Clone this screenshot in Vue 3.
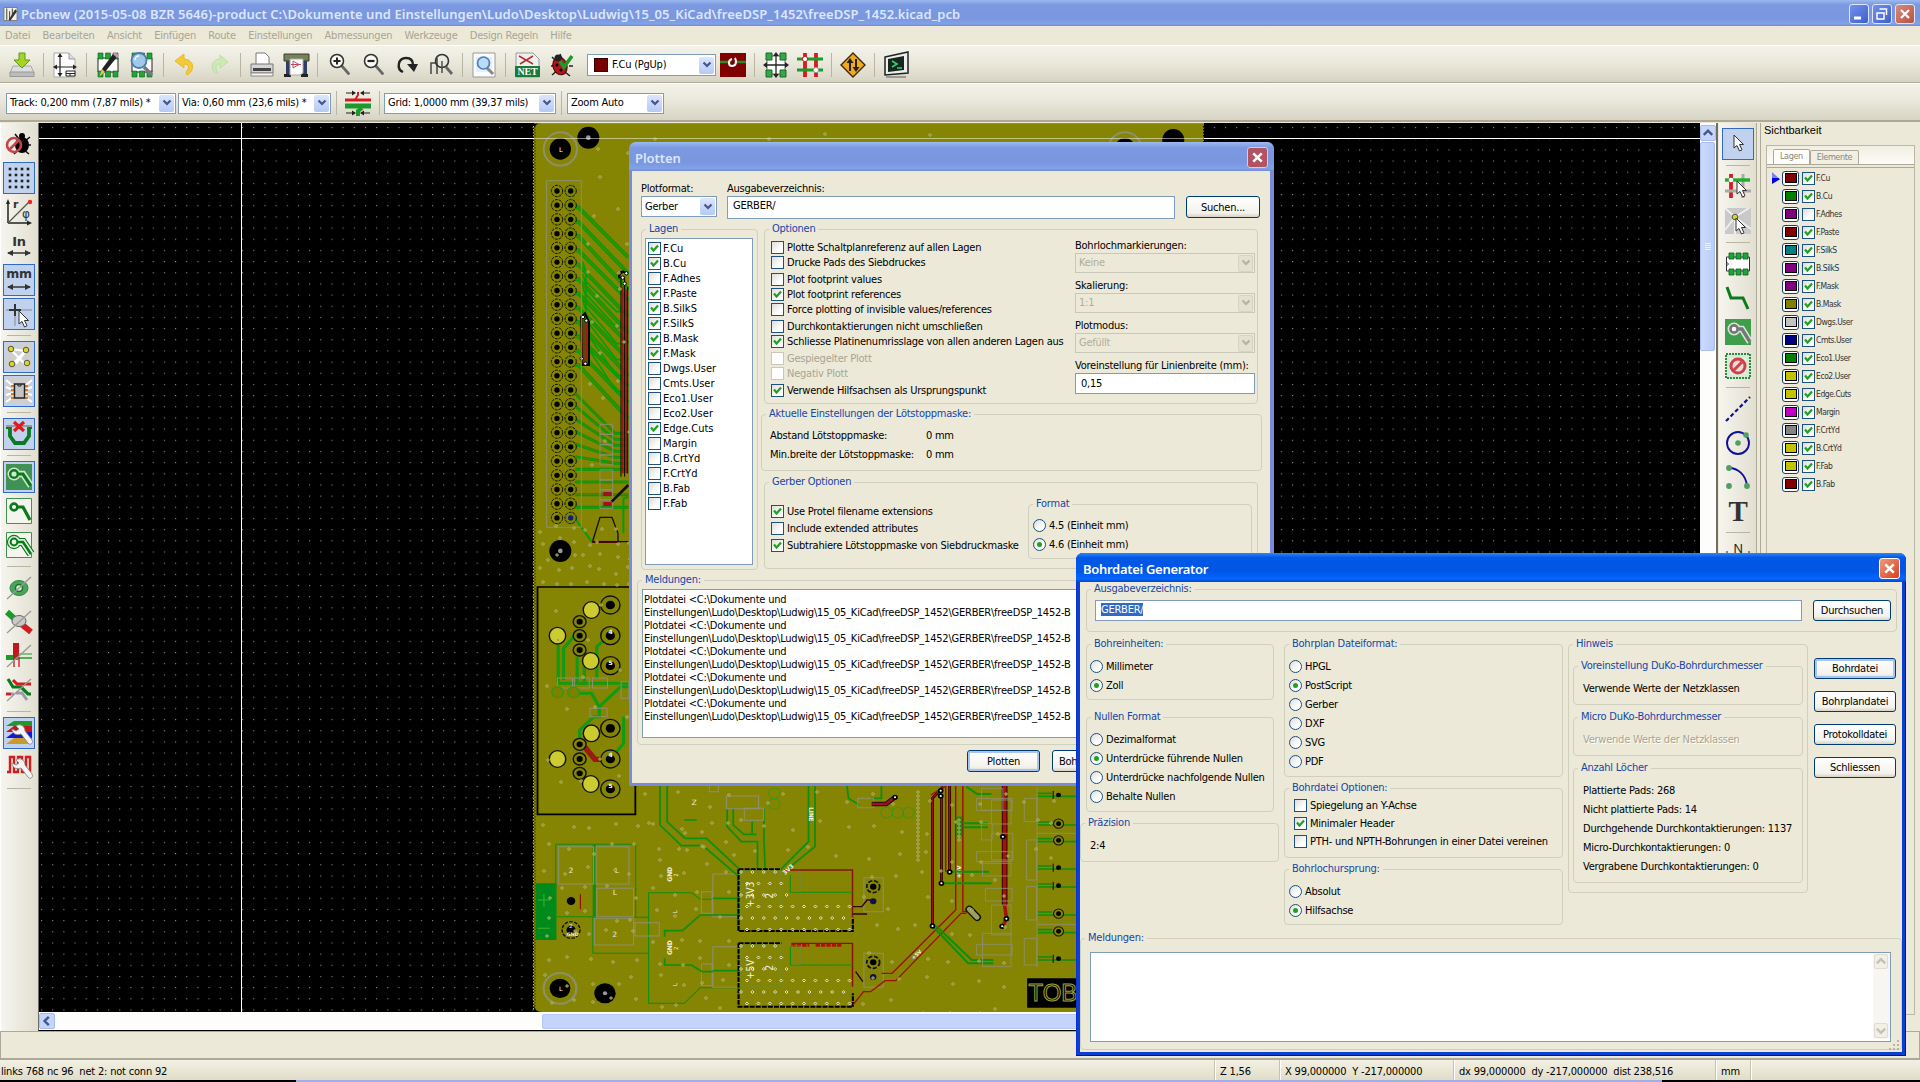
<script setup>
const svg = (body) => `<svg viewBox="0 0 26 26" width="26" height="26">${body}</svg>`
const pads = '<path fill="#fff" stroke="#222" stroke-width="1" d="M3 6h20v14H3z"/><path fill="#1fa53a" stroke="#0b5c1c" stroke-width=".6" d="M3 1h5v6H3zM10.500 1h5v6h-5zM18 1h5v6h-5zM3 19h5v6H3zM10.500 19h5v6h-5zM18 19h5v6h-5z"/>'
const lens = (x, y, r, sign) => `<path d="M${x + r * 0.7} ${y + r * 0.7}l7 8" stroke="#666" stroke-width="2.800" stroke-linecap="round"/><circle cx="${x}" cy="${y}" r="${r}" fill="#fafaf4" stroke="#333" stroke-width="1.600"/>${sign}`
const pointer = (x, y) => `<path transform="translate(${x} ${y})" d="M0 0v13l3-2.500 2.500 5.500 2.500-1.200-2.500-5.300h4z" fill="#fff" stroke="#333" stroke-width="1"/>`
const wrench = '<path d="M7 2c4-3 9 0 9 5l7 9c2 3-2 6-4 3l-7-9c-5 2-9-1-9-5l4 2 3-2z" fill="#f4f4f4" stroke="#888" stroke-width=".9"/>'
const arrows = '<path d="M2 20h22" stroke="#333" stroke-width="1.500"/><path d="M1 20l6-3v6zM25 20l-6-3v6z" fill="#333"/>'

const icons = {
  save: '<path d="M4 14h18l3 7H1z" fill="#ddd" stroke="#aaa"/><path d="M1 20h24v4.500H1z" fill="#bcbcbc" stroke="#999"/><path d="M10 1h6v7h5l-8 8-8-8h5z" fill="#a5d32a" stroke="#5d9a12"/>',
  page: '<path d="M2 1h15l6 6v18H2z" fill="#fdfdfd" stroke="#aaa"/><path d="M17 1v6h6" fill="#ddd" stroke="#999"/><path d="M8 3v20M2 15h20" stroke="#222" stroke-width="1.200"/><path d="M8 1l-2.500 4h5zM8 25l-2.500-4h5zM1 15l4-2.500v5zM25 15l-4-2.500v5z" fill="#222"/><path d="M14 19h9v5h-9zM14 21.500h9M18 21.500V24" fill="#fff" stroke="#222"/>',
  modedit: pads + '<path d="M4 25l3-8L18 2l4 3L10 20z" fill="#222"/><path d="M18 2l2-1.500 4 2.500-2 3z" fill="#d58bc0"/><path d="M4 25l3-8 3 3z" fill="#e5c64a"/>',
  modview: pads + '<path d="M15 15l8 8" stroke="#778" stroke-width="3.500"/><circle cx="10" cy="8.500" r="7.500" fill="#9fc9ea" stroke="#4c7ba5" stroke-width="1.800"/><path d="M6 8a4 4 0 014-4" stroke="#fff" stroke-width="1.500" fill="none"/>',
  undo: '<path d="M12 2L3 9l9 7v-4c5 0 6 4 2 8l1 3c8-4 8-15-3-16z" fill="#f5c93a" stroke="#e6b92c"/>',
  redo: '<path d="M14 3l8 7-8 6v-4c-5 0-5 5-2 9C4 21 4 7 14 7z" fill="#cdeab6" stroke="#badfa2"/>',
  print: '<path d="M7 1h9l4 4v8H7z" fill="#fff" stroke="#777"/><path d="M2 12h22v9H2z" fill="#d5d5d5" stroke="#777"/><path d="M4 16h18v3H4z" fill="#444"/><path d="M2 21h22v3H2z" fill="#f6f6f6" stroke="#888"/>',
  plot: '<path d="M1 2h25v7H1z" fill="#76805a" stroke="#39412a"/><path d="M3 9h4v13H3zM20 9h4v13h-4z" fill="#2e3f63"/><path d="M1 22h7v3H1zM18 22h7v3h-7z" fill="#222"/><path d="M7 7h13v14l-3 2H7z" fill="#fff" stroke="#aaa"/><path d="M10 9v7l6-3.500zM8 12.500h10" fill="none" stroke="#c04a5c"/>',
  zoomin: lens(11, 9, 6.5, '<path d="M7.500 9h7M11 5.500v7" stroke="#222" stroke-width="2"/>'),
  zoomout: lens(11, 9, 6.5, '<path d="M7.500 9h7" stroke="#222" stroke-width="2.200"/>'),
  redraw: '<path d="M9 20C2 17 4 6 12 6c5 0 7 3 7 7" fill="none" stroke="#222" stroke-width="2.400"/><path d="M13 12h11l-4 8z" fill="#222"/>',
  fit: '<path d="M3 22V11h5M9 6v16" fill="none" stroke="#444" stroke-width="1.500"/><path d="M18 15l6 7" stroke="#666" stroke-width="2.800"/><circle cx="14" cy="9" r="6.500" fill="none" stroke="#333" stroke-width="1.600"/><path d="M14 9v12" stroke="#444" stroke-width="1.400"/>',
  find: '<path d="M2 1h22v24H2z" fill="#fbfbfb" stroke="#999"/><path d="M5 5h16v15H5z" fill="#e6eef8"/><path d="M16 16l6 6" stroke="#888" stroke-width="3"/><circle cx="12.500" cy="11" r="6" fill="#b9dcf8" stroke="#4b7fb8" stroke-width="1.700"/>',
  net: '<path d="M2 1h17l6 6v18H2z" fill="#eef0ee" stroke="#999"/><path d="M5 4l14 8M6 12l13-8" stroke="#b03030" stroke-width="1.500"/><path d="M1 14h25v11H1z" fill="#1a7a3a"/><text x="13.500" y="23" text-anchor="middle" font-family="Liberation Serif" font-weight="bold" font-size="10" fill="#fff">NET</text>',
  drc: '<path d="M4 5l5 5M3 14h6M4 23l6-5M12 2l2 5M21 14h4M17 20l5 4" stroke="#222" stroke-width="1.500"/><ellipse cx="12" cy="14" rx="7" ry="9" transform="rotate(-18 12 14)" fill="#b3151a" stroke="#400"/><circle cx="10" cy="6" r="3.500" fill="#222"/><circle cx="9" cy="13" r="1.500"/><circle cx="13" cy="18" r="1.500"/><path d="M12 9l4 6 8-11" fill="none" stroke="#1c9a2c" stroke-width="3.600"/>',
  layers: '<path d="M0 1h26v24H0z" fill="#800000"/><path d="M0 10h10M17 10h9" stroke="#2a8a2a" stroke-width="2.600"/><path d="M12 7c-4 1-4 7 0 7s5-4 3-8" fill="none" stroke="#fff" stroke-width="2"/>',
  autoplace: '<path d="M4 4h18v18H4z" fill="#fff" stroke="#666"/><path d="M3 1h6v7H3zM17 1h6v7h-6zM3 18h6v7H3zM17 18h6v7h-6z" fill="#36a648" stroke="#156a24"/><path d="M13 3v20M2 13h22" stroke="#222" stroke-width="1.300"/><path d="M13 0l-3 4h6zM13 26l-3-4h6zM0 13l4-3v6zM26 13l-4-3v6z" fill="#222"/>',
  autoroute: '<path d="M8 1v24M19 1v24" stroke="#d31c20" stroke-width="3.800"/><path d="M0 7h26M0 18h26" stroke="#1c9a2c" stroke-width="3.200"/><circle cx="8" cy="7" r="2.600" fill="#fff" stroke="#d31c20"/><circle cx="19" cy="18" r="2.600" fill="#fff" stroke="#999"/>',
  fastroute: '<path d="M13 1l12 12-12 12L1 13z" fill="#f5a81c" stroke="#3b2a06" stroke-width="1.400"/><path d="M10 19V9M16 7v10" stroke="#222" stroke-width="2"/><path d="M10 6l-3.500 5h7zM16 20l-3.500-5h7z" fill="#222"/>',
  console: '<path d="M2 5L25 0v21L2 23z" fill="#eee" stroke="#222" stroke-width="1.500"/><path d="M5 7l16-3v14L5 20z" fill="#16281c"/><path d="M9 9l5 3-5 3M14 16h5" fill="none" stroke="#32d17e" stroke-width="1.600"/><path d="M3 25h20" stroke="#999" stroke-width="2"/>',
  trackwidth: '<path d="M0 10h26" stroke="#d31c20" stroke-width="3"/><path d="M13 2v3l-3 5" stroke="#d31c20" stroke-width="2" fill="none"/><path d="M0 16h26" stroke="#1c9a2c" stroke-width="5"/><path d="M17 18l-4 3v5" stroke="#1c9a2c" stroke-width="4" fill="none"/><path d="M1 3h9M25 3h-9M1 23h9M25 23h-9" stroke="#222" stroke-width="1.200"/><path d="M11 3L7 .5v5zM15 3l4-2.500v5zM11 23l-4-2.500v5zM15 23l4-2.500v5z" fill="#222"/>',
  drcoff: '<path d="M9 3l4 5M24 6l-5 4M25 14h-5M23 23l-5-4M8 23l4-4" stroke="#111" stroke-width="1.600"/><ellipse cx="16" cy="14" rx="7" ry="8"/><circle cx="16" cy="5" r="3"/><circle cx="8" cy="14" r="7" fill="none" stroke="#c7444b" stroke-width="2.600"/><path d="M3 19L13 9" stroke="#c7444b" stroke-width="2.600"/>',
  grid: '<g fill="#222">' + [4, 10, 16, 22].map((y) => [4, 10, 16, 22].map((x) => `<rect x="${x - 1.3}" y="${y - 1.3}" width="2.600" height="2.600"/>`).join('')).join('') + '</g>',
  polar: '<path d="M2 24V3M2 24h22" stroke="#222" stroke-width="1.500"/><path d="M2 0l-2 5h4zM26 24l-5-2.500v5z" fill="#222"/><path d="M2 24L23 3" stroke="#555" stroke-width="1.300"/><circle cx="24" cy="3" r="2.200" fill="#e22"/><text x="7" y="9" font-family="DejaVu Sans" font-size="11" font-weight="bold" fill="#333">r</text><text x="16" y="19" font-family="DejaVu Sans" font-size="12" fill="#333">φ</text>',
  inch: '<text x="13" y="13" text-anchor="middle" font-family="DejaVu Sans" font-size="13" font-weight="bold" fill="#333">In</text>' + arrows,
  mm: '<text x="13" y="11" text-anchor="middle" font-family="DejaVu Sans" font-size="12.500" font-weight="bold" fill="#333">mm</text>' + arrows,
  cursor: '<path d="M0 9h26" stroke="#888" stroke-width="1"/><path d="M9 3v12M3 9h12" stroke="#333" stroke-width="2"/><path d="M9 15v10" stroke="#888"/>' + pointer(13, 10),
  ratsnest: '<path d="M0 0h26v26H0z" fill="#cfcfcf"/><path d="M4 5l16 16M6 21L20 6M4 5l16 2M20 7L10 20" stroke="#fff" stroke-width="2"/><g fill="#d8d81c" stroke="#555"><circle cx="5" cy="5" r="2.800"/><circle cx="20" cy="6" r="2.800"/><circle cx="6" cy="20" r="2.800"/><circle cx="21" cy="19" r="2.800"/></g>',
  module: '<path d="M0 0h26v26H0z" fill="#cfcfcf"/><path d="M0 2l7 6M0 9l7 3M0 17l7-2M0 24l7-5M26 2l-7 6M26 9l-7 3M26 17l-7-2M26 24l-7-5" stroke="#fff" stroke-width="2"/><path d="M5 8h3M5 12h3M5 16h3M5 20h3M19 8h3M19 12h3M19 16h3M19 20h3" stroke="#e07a20" stroke-width="2.200"/><path d="M8.500 6h10v14h-10z" fill="#c4c4c4" stroke="#222" stroke-width="1.400"/><path d="M12 6v2h3V6" fill="none" stroke="#222"/>',
  autodel: '<path d="M0 6h4v9l5 7h9l5-7V6h3" fill="none" stroke="#0c7a24" stroke-width="3.800"/><path d="M0 5h26" stroke="#999" stroke-width="2"/><path d="M8 1l10 9M18 1L8 10" stroke="#e01a1f" stroke-width="3.200"/>',
  zone1: '<path d="M0 0h26v26H0z" fill="#3f9154"/><path d="M9 10h8l8 12" fill="none" stroke="#cfe8d0" stroke-width="6.500"/><circle cx="8" cy="10" r="6.500" fill="#cfe8d0"/><path d="M9 10h8l8 12" fill="none" stroke="#0b7a1c" stroke-width="3.200"/><circle cx="8" cy="10" r="3.800" fill="#cfe8d0" stroke="#0b7a1c" stroke-width="2.400"/>',
  zone2: '<path d="M.5 .5h25v25H.5z" fill="#f4f6ee" stroke="#3f9154"/><path d="M9 9h8l7 13" fill="none" stroke="#0b7a1c" stroke-width="3.200"/><circle cx="8" cy="9" r="3.400" fill="#f4f6ee" stroke="#0b7a1c" stroke-width="2.600"/>',
  zone3: '<path d="M.5 .5h25v25H.5z" fill="#f4f6ee" stroke="#3f9154"/><path d="M9 10h8l8 12" fill="none" stroke="#0b7a1c" stroke-width="8"/><circle cx="8" cy="10" r="7.200" fill="#0b7a1c"/><path d="M9 10h8l8 12" fill="none" stroke="#e4f0e0" stroke-width="5.800"/><circle cx="8" cy="10" r="6" fill="#e4f0e0"/><path d="M9 10h8l8 12" fill="none" stroke="#0b7a1c" stroke-width="2.600"/><circle cx="8" cy="10" r="3.400" fill="#e4f0e0" stroke="#0b7a1c" stroke-width="2"/>',
  padsk: '<ellipse cx="13" cy="13" rx="9" ry="7.500" fill="#4da35e" stroke="#2c8a3c"/><circle cx="13" cy="13" r="3.500" fill="#dfe8d8" stroke="#0b7a1c" stroke-width="1.500"/><path d="M1 24L25 2" stroke="#999" stroke-width="1.300"/>',
  viask: '<path d="M1 3l10 9" stroke="#1c9a2c" stroke-width="6"/><path d="M14 14l11 9" stroke="#d31c20" stroke-width="6"/><ellipse cx="13" cy="12" rx="7" ry="5.500" fill="#c9c9c9" stroke="#666"/><path d="M1 24L25 2" stroke="#999" stroke-width="1.300"/>',
  tracksk: '<path d="M0 15h26" stroke="#1c9a2c" stroke-width="1.500"/><path d="M0 12h12v5H0z" fill="#1c9a2c"/><path d="M7 0h6v15H7z" fill="#c4161c"/><path d="M8 14v10M13 14v10" stroke="#c4161c" stroke-width="1.300"/><path d="M12 11h14" stroke="#1c9a2c"/><path d="M1 24L25 2" stroke="#999" stroke-width="1.300"/>',
  contrast: '<path d="M7 3l4 4h14" stroke="#d31c20" stroke-width="3" fill="none"/><path d="M2 2l5 8h8l7 7 3 0" stroke="#0b7a1c" stroke-width="3.200" fill="none"/><path d="M0 17h6l2 0M10 16l6 0 5 7" stroke="#99a" stroke-width="3" fill="none"/><path d="M0 17h5" stroke="#d31c20" stroke-width="2.500"/><path d="M1 24L25 2" stroke="#999" stroke-width="1.300"/>',
  layerman: '<path d="M0 24l8-6h18v6z" fill="#c79b2e"/><path d="M0 18l8-6h18v6z" fill="#1818d0"/><path d="M0 12l8-6h18v6z" fill="#c4161c"/><path d="M0 6l8-5h18v5z" fill="#1c9a2c"/><g transform="translate(3 4)">' + wrench + '</g>',
  microwave: '<path d="M1 18h3V3h4v15h4V3h4v15h4V3h4v15" fill="none" stroke="#d31c20" stroke-width="2.400"/><g transform="translate(3 4)">' + wrench + '</g>',
  select: pointer(9, 4),
  netsel: '<path d="M6 0v24" stroke="#d31c20" stroke-width="3.800"/><path d="M0 17h26M18 0v24" stroke="#aaa" stroke-width="3"/><path d="M0 6h25" stroke="#1cae2c" stroke-width="3.400"/><circle cx="6" cy="6" r="2.300" fill="#fff"/>' + pointer(12, 7),
  ratsel: '<path d="M0 0h26v26H0z" fill="#c9c9c9"/><path d="M0 0l10 9L0 22M10 9L24 0M10 9v17M10 9l16 12" stroke="#eee" stroke-width="2" fill="none"/><circle cx="10" cy="9" r="2.800" fill="#d8d81c" stroke="#555"/>' + pointer(11, 10),
  footprint: '<path fill="#fff" stroke="#333" d="M1.500 6h23v14h-23z"/><path fill="#1fa53a" stroke="#0b5c1c" stroke-width=".8" d="M4 2h5v6H4zM11 2h5v6h-5zM18 2h5v6h-5zM4 18h5v6H4zM11 18h5v6h-5zM18 18h5v6h-5z"/><path d="M1.500 11l2 2-2 2" fill="none" stroke="#333"/>',
  track: '<path d="M2 2l4 11h12l5 11" fill="none" stroke="#0b7a1c" stroke-width="3"/>',
  zone: '<path d="M0 0h26v26H0z" fill="#3f9e4c"/><path d="M9 10h8l8 13" fill="none" stroke="#d8e8d8" stroke-width="6.500"/><circle cx="9" cy="10" r="6.500" fill="#d8e8d8"/><path d="M9 10h8l8 13" fill="none" stroke="#777" stroke-width="3.400"/><circle cx="9" cy="10" r="3.600" fill="#fff" stroke="#777" stroke-width="2.600"/>',
  keepout: '<path d="M1 1h24v24H1z" fill="#d6ead6" stroke="#2a8a3a" stroke-width="2" stroke-dasharray="2 1"/><path d="M5 5h16v16H5z" fill="#e6f2e2"/><circle cx="13" cy="13" r="7" fill="#f4dcd8" stroke="#d0424a" stroke-width="3"/><path d="M8 18L18 8" stroke="#d0424a" stroke-width="3"/>',
  line: '<path d="M1 25L25 1" stroke="#10109a" stroke-width="2.200" stroke-dasharray="4 2.500"/>',
  circle: '<circle cx="13" cy="13" r="11" fill="none" stroke="#10109a" stroke-width="1.900"/><circle cx="13" cy="13" r="2.800" fill="#4f9e62"/><circle cx="21" cy="5" r="2.800" fill="#4f9e62"/>',
  arc: '<path d="M4 4c9 0 17 7 18 18" fill="none" stroke="#10109a" stroke-width="1.900"/><circle cx="4" cy="4" r="2.900" fill="#4f9e62"/><circle cx="4" cy="22" r="2.900" fill="#4f9e62"/><circle cx="22" cy="22" r="2.900" fill="#4f9e62"/>',
  text: '<text x="13" y="23" text-anchor="middle" font-family="Liberation Serif" font-weight="bold" font-size="29" fill="#333">T</text>',
  dim: '<text x="13" y="12" text-anchor="middle" font-family="Liberation Sans" font-size="13" fill="#222">N</text><path d="M2 10v14M24 10v14M2 17h22" stroke="#222"/>'
}

const topBar = ['save', '|', 'page', '|', 'modedit', 'modview', '|', 'undo', 'redo', '|', 'print', 'plot', '|', 'zoomin', 'zoomout', 'redraw', 'fit', '|', 'find', '|', 'net', 'drc']
const topBarEnd = ['layers', '|', 'autoplace', 'autoroute', '|', 'fastroute', '|', 'console']
const leftBar = ['drcoff', 'grid*', 'polar', 'inch', 'mm*', 'cursor*', '|', 'ratsnest*', 'module*', '|', 'autodel*', '|', 'zone1*', 'zone2', 'zone3', '|', 'padsk', 'viask', 'tracksk', 'contrast', '|', 'layerman*', 'microwave', '|']
const rightBar = ['select*', '|', 'netsel', 'ratsel', '|', 'footprint', 'track', 'zone', 'keepout', '|', 'line', 'circle', 'arc', 'text', '|', 'dim']
const menu = ['Datei', 'Bearbeiten', 'Ansicht', 'Einfügen', 'Route', 'Einstellungen', 'Abmessungen', 'Werkzeuge', 'Design Regeln', 'Hilfe']
const icon = (name) => svg(icons[name.replace('*', '')])

const visible = [
  ['F.Cu', '#800000', 1], ['B.Cu', '#008000', 1], ['F.Adhes', '#800080', 0], ['F.Paste', '#840000', 1],
  ['F.SilkS', '#008080', 1], ['B.SilkS', '#800080', 1], ['F.Mask', '#800080', 1], ['B.Mask', '#808000', 1],
  ['Dwgs.User', '#c2c2c2', 1], ['Cmts.User', '#000084', 1], ['Eco1.User', '#008000', 1], ['Eco2.User', '#c2c200', 1],
  ['Edge.Cuts', '#c2c200', 1], ['Margin', '#c200c2', 1], ['F.CrtYd', '#848484', 1], ['B.CrtYd', '#c2c200', 1],
  ['F.Fab', '#c2c200', 1], ['B.Fab', '#840000', 1]
]
const plotLayers = [
  ['F.Cu', 1], ['B.Cu', 1], ['F.Adhes', 0], ['F.Paste', 1], ['B.SilkS', 1], ['F.SilkS', 1], ['B.Mask', 1], ['F.Mask', 1],
  ['Dwgs.User', 0], ['Cmts.User', 0], ['Eco1.User', 0], ['Eco2.User', 0], ['Edge.Cuts', 1], ['Margin', 0],
  ['B.CrtYd', 0], ['F.CrtYd', 0], ['B.Fab', 0], ['F.Fab', 0]
]
const plotOptions = [
  ['Plotte Schaltplanreferenz auf allen Lagen', 0], ['Drucke Pads des Siebdruckes', 0],
  ['Plot footprint values', 0, 'gap'], ['Plot footprint references', 1], ['Force plotting of invisible values/references', 0],
  ['Durchkontaktierungen nicht umschließen', 0, 'gap'], ['Schliesse Platinenumrisslage von allen anderen Lagen aus', 1],
  ['Gespiegelter Plott', 0, 'gap off'], ['Negativ Plott', 0, 'off'], ['Verwende Hilfsachsen als Ursprungspunkt', 1, 'gap']
]
const plotCombos = [['Bohrlochmarkierungen:', 'Keine'], ['Skalierung:', '1:1'], ['Plotmodus:', 'Gefüllt']]
const gerberOptions = [['Use Protel filename extensions', 1], ['Include extended attributes', 0], ['Subtrahiere Lötstoppmaske von Siebdruckmaske', 1]]
const units = [['Millimeter', 0], ['Zoll', 1]]
const zeros = [['Dezimalformat', 0], ['Unterdrücke führende Nullen', 1], ['Unterdrücke nachfolgende Nullen', 0], ['Behalte Nullen', 0]]
const mapFormats = [['HPGL', 0], ['PostScript', 1], ['Gerber', 0], ['DXF', 0], ['SVG', 0], ['PDF', 0]]
const drillOptions = [['Spiegelung an Y-Achse', 0], ['Minimaler Header', 1], ['PTH- und NPTH-Bohrungen in einer Datei vereinen', 0]]
const origins = [['Absolut', 0], ['Hilfsachse', 1]]
const holes = ['Plattierte Pads: 268', 'Nicht plattierte Pads: 14', 'Durchgehende Durchkontaktierungen: 1137', 'Micro-Durchkontaktierungen: 0', 'Vergrabene Durchkontaktierungen: 0']
const drillButtons = ['Bohrdatei', 'Bohrplandatei', 'Protokolldatei', 'Schliessen']

// Board geometry
const range = (n) => Array.from({ length: n }, (_, i) => i)
let seed = 7
const rnd = () => (seed = (seed * 16807) % 2147483647) / 2147483647
// One via per cell, nudged inside it, so that the fill looks evenly stitched
const stitch = (x0, y0, x1, y1, step) => {
  const out = []
  for (let y = y0; y < y1; y += step) for (let x = x0; x < x1; x += step) out.push([Math.round(x + rnd() * step * 0.6), Math.round(y + rnd() * step * 0.6)])
  return out
}
const vias = [
  ...stitch(540, 524, 628, 585, 14), ...stitch(545, 596, 628, 808, 36), ...stitch(588, 145, 626, 470, 28),
  ...stitch(540, 820, 736, 1006, 22), ...stitch(645, 792, 1075, 870, 27), ...stitch(862, 870, 1000, 1006, 26), ...stitch(640, 126, 1190, 140, 56),
  ...range(18).map((i) => [918, 792 + i * 4]), ...range(6).map((i) => [959, 820 + i * 4])
]
const chipVias = (x, y) => range(6).flatMap((r) => range(r === 0 ? 4 : 10).map((c) => [x + c * 11.4 + (r % 2 ? 6 : 0), y + r * 11.5]))
  .filter(([a, b]) => !(a > x + 50 && b < y + 24))
const padDia = (v) => `M${v[0] - 1.5} ${v[1]}l1.500-1.500 1.500 1.500-1.500 1.500z`
const viaPath = vias.map(padDia).join('')
const chipPath = [...chipVias(741, 872), ...chipVias(741, 946)].map(padDia).join('')
const yellowPads = [[200, 180], [105, 257], [198, 333], [200, 550], [105, 627], [198, 702]]
const ringPads = [[253, 165, 27], [253, 257, 27], [253, 347, 27], [167, 215, 18], [167, 257, 18], [167, 300, 18], [253, 535, 27], [253, 627, 27], [253, 717, 27], [167, 583, 18], [167, 627, 18], [167, 670, 18]]
const sidePads = [[735, 0], [821, 1], [871, 1], [953, 0], [1007, 0], [1091, 1], [1144, 1], [1226, 0]]
</script>

<template>
  <div class="app">
    <header class="titlebar">
      <svg class="appicon" viewBox="0 0 16 16"><path d="M1 1h14v14H1z" fill="#f4f1e4" stroke="#777" /><path d="M4 2v12M7 5v10M10 2v8" stroke="#555" stroke-width="1.200" /><path d="M6 14l7-11 2 2-7 10z" fill="#333" /></svg>
      <span class="apptitle">Pcbnew (2015-05-08 BZR 5646)-product C:\Dokumente und Einstellungen\Ludo\Desktop\Ludwig\15_05_KiCad\freeDSP_1452\freeDSP_1452.kicad_pcb</span>
      <div class="sysbtns">
        <span class="sys"><svg viewBox="0 0 18 18"><path d="M4 13h7" stroke="#fff" stroke-width="3" /></svg></span>
        <span class="sys"><svg viewBox="0 0 18 18"><path d="M6.500 4h7v6M4 8h7v6H4z" stroke="#fff" stroke-width="1.500" fill="none" /></svg></span>
        <span class="sys close"><svg viewBox="0 0 18 18"><path d="M5 5l8 8M13 5l-8 8" stroke="#fff" stroke-width="2.200" /></svg></span>
      </div>
    </header>
    <nav class="menu"><span v-for="m in menu" :key="m">{{ m }}</span></nav>

    <div class="toolbar">
      <template v-for="(t, i) in topBar" :key="i">
        <i v-if="t === '|'" class="vsep"></i>
        <span v-else class="slot" v-html="icon(t)"></span>
      </template>
      <div class="combo layer"><i class="chip"></i><span>F.Cu (PgUp)</span><b class="drop"><svg viewBox="0 0 10 8"><path d="M1.500 1.500L5 5l3.500-3.500" /></svg></b></div>
      <template v-for="(t, i) in topBarEnd" :key="'e' + i">
        <i v-if="t === '|'" class="vsep"></i>
        <span v-else class="slot" v-html="icon(t)"></span>
      </template>
    </div>
    <div class="toolbar second">
      <div class="combo c1"><span>Track: 0,200 mm (7,87 mils) *</span><b class="drop"><svg viewBox="0 0 10 8"><path d="M1.500 1.500L5 5l3.500-3.500" /></svg></b></div>
      <div class="combo c2"><span>Via: 0,60 mm (23,6 mils) *</span><b class="drop"><svg viewBox="0 0 10 8"><path d="M1.500 1.500L5 5l3.500-3.500" /></svg></b></div>
      <i class="vsep"></i><span class="slot" v-html="icon('trackwidth')"></span><i class="vsep"></i>
      <div class="combo c3"><span>Grid: 1,0000 mm (39,37 mils)</span><b class="drop"><svg viewBox="0 0 10 8"><path d="M1.500 1.500L5 5l3.500-3.500" /></svg></b></div>
      <i class="vsep"></i>
      <div class="combo c4"><span>Zoom Auto</span><b class="drop"><svg viewBox="0 0 10 8"><path d="M1.500 1.500L5 5l3.500-3.500" /></svg></b></div>
    </div>

    <main class="body">
      <aside class="tools left">
        <template v-for="(t, i) in leftBar" :key="i">
          <i v-if="t === '|'" class="hsep"></i>
          <span v-else :class="['tool', { on: t.endsWith('*') }]" v-html="icon(t)"></span>
        </template>
      </aside>

      <section class="work">
        <div class="view">
          <svg class="pcb" viewBox="39 123 1661 889" width="1661" height="889">
            <defs>
              <pattern id="dots" x="41" y="127" width="11.170" height="11.170" patternUnits="userSpaceOnUse"><rect width="1.100" height="1.100" fill="#8a8a8a" /></pattern>
              <pattern id="weave" width="2" height="2" patternUnits="userSpaceOnUse"><rect width="2" height="2" fill="#888500" /><rect width="1" height="1" fill="#828200" /></pattern>
            </defs>
            <rect x="39" y="123" width="1661" height="889" fill="#000" />
            <rect x="39" y="123" width="1661" height="889" fill="url(#dots)" />
            <path d="M534 131q0-8 8-8h662v889H542q-8 0-8-8z" fill="url(#weave)" />
            <path d="M533.500 126v884" stroke="#c2c25a" stroke-dasharray="1.500 1.500" /><path d="M535 126v884" stroke="#2a2a00" stroke-dasharray="1.500 1.500" />
            <path d="M1203.500 126v884" stroke="#000" stroke-dasharray="1.500 1.500" />

            <g transform="translate(520 120) scale(.3333)">
              <g v-for="k in range(12)" :key="k" fill="none">
                <path :d="`M165 ${262 + k * 43}h10l${150} ${150 + (k % 3) * 6}`" stroke="#00a008" stroke-width="12" />
                <path :d="`M165 ${262 + k * 43}h10l${150} ${150 + (k % 3) * 6}`" stroke="#558400" stroke-width="4" />
              </g>
              <path v-for="k in range(6)" :key="'m' + k" :d="`M188 ${425 + k * 38}l10 30v${30}l92 ${90 + k * 10}h35`" fill="none" stroke="#00a008" stroke-width="5" />
              <g v-for="k in range(10)" :key="'b' + k" fill="none">
                <path :d="`M165 ${820 + k * 38}l${120} ${Math.max(0, 120 - k * 20)}h40`" stroke="#009a08" stroke-width="9" />
                <path :d="`M165 ${820 + k * 38}l${120} ${Math.max(0, 120 - k * 20)}h40`" stroke="#558400" stroke-width="3" />
              </g>
              <path d="M240 913h38v30h-38zM240 943h38v31h-38zM240 974h38v31h-38zM240 1005h38v30h-38zM240 1050h38v30h-38zM240 1080h38v30h-38zM240 1110h38v30h-38zM240 1140h38v26h-38z" fill="none" stroke="#8f8f70" stroke-width="3" />
              <path d="M303 470v600M314 470v600M323 500v560" stroke="#000" stroke-width="3" />
              <path d="M308 500v560M319 510v550" stroke="#8a1c10" stroke-width="6" />
              <path d="M300 475a12 12 0 0120-14" stroke="#000" stroke-width="8" fill="none" />
              <path d="M183 590l12-10 12 25v130h-20z" fill="#4c5008" stroke="#000" stroke-width="6" />
              <path d="M190 620v110M200 610v110" stroke="#a02010" stroke-width="5" />
              <g fill="#fff" stroke="#000" stroke-width="3"><circle cx="189" cy="591" r="5" /><circle cx="199" cy="602" r="5" /><circle cx="185" cy="716" r="5" /><circle cx="196" cy="731" r="5" /><circle cx="308" cy="473" r="5" /><circle cx="319" cy="460" r="5" /><circle cx="314" cy="491" r="5" /></g>
              <path d="M250 1122h25M250 1152h25" stroke="#a01020" stroke-width="12" />
              <path d="M275 1145l50-50" stroke="#111" stroke-width="8" />
              <path d="M217 1267l23-75h36l18 48v25h35" fill="none" stroke="#111" stroke-width="4" />
              <path d="M217 1266h80" stroke="#400" stroke-width="6" />
              <path d="M310 1240v-100q0-8 15-8M165 1195l50 70" fill="none" stroke="#0c9a0c" stroke-width="6" />
              <path d="M80 182h104v1040H80z" fill="none" stroke="#8f8f70" stroke-width="3" />
              <g v-for="k in range(24)" :key="'p' + k">
                <circle :cx="111" :cy="213 + k * 42.65" r="17" fill="#858500" stroke="#111" stroke-width="3" stroke-dasharray="9 3" />
                <circle :cx="152" :cy="213 + k * 42.65" r="17" fill="#7a8500" stroke="#111" stroke-width="3" stroke-dasharray="9 3" />
                <circle :cx="111" :cy="213 + k * 42.65" r="8" />
                <circle :cx="152" :cy="213 + k * 42.65" r="8" :fill="k === 23 ? '#1a1a80' : '#000'" />
              </g>
              <circle cx="121" cy="87" r="50" fill="none" stroke="#8f8f70" stroke-width="6" />
              <circle cx="121" cy="87" r="32" /><circle cx="205" cy="53" r="33" /><circle cx="121" cy="1293" r="33" />
              <circle cx="205" cy="53" r="7" fill="#999" /><circle cx="121" cy="1293" r="7" fill="#999" />
              <text x="117" y="95" font-size="20" fill="#fff" font-family="DejaVu Sans">L</text>
              <circle cx="1815" cy="87" r="50" fill="none" stroke="#8f8f70" stroke-width="6" /><circle cx="1815" cy="87" r="32" />
              <circle cx="1960" cy="60" r="33" />
            </g>

            <path d="M534 123h670" stroke="#a8a840" stroke-width="1" />

            <g transform="translate(520 550) scale(.35714 .33333)">
              <g fill="none" stroke="#129a12" stroke-width="9">
                <path d="M107 285v110M122 390v-95l45-55M160 320v80M180 320v85M215 385v-95l30-30M105 400h200M140 430h60l22 40v30M222 470l60-60h25M167 590v-50l40-40h20M290 500v80l-30 40" />
              </g>
              <path d="M180 590l30 38h45" fill="none" stroke="#9a1c10" stroke-width="16" />
              <g fill="none" stroke="#8f8f70" stroke-width="3"><path d="M105 384h42v30h-42zM152 384h42v30h-42zM203 384h42v30h-42zM196 475h48v25h-48zM283 395h22v50h-22z" /></g>
              <circle cx="105" cy="427" r="16" fill="#808000" stroke="#2f9a12" stroke-width="4" /><circle cx="150" cy="427" r="16" fill="#808000" stroke="#2f9a12" stroke-width="4" />
              <path d="M49 111h274v682H49z" fill="none" stroke="#000" stroke-width="5" />
              <ellipse v-for="(p, i) in yellowPads" :key="'y' + i" :cx="p[0]" :cy="p[1]" rx="23" ry="25" fill="#cccc30" stroke="#111" stroke-width="4" />
              <g v-for="(p, i) in ringPads" :key="'r' + i">
                <circle :cx="p[0]" :cy="p[1]" :r="p[2]" fill="#858500" stroke="#111" stroke-width="4" />
                <circle :cx="p[0]" :cy="p[1]" :r="p[2] * 0.48" />
              </g>
              <g font-family="DejaVu Sans" font-size="18" font-weight="bold" fill="#fff"><text x="247" y="252">4</text><text x="247" y="346">5</text><text x="247" y="622">4</text><text x="247" y="715">5</text></g>

              <path d="M44 1000h58v170H44z" fill="#008a1c" />
              <path d="M50 1050h34M67 1032v38M50 1135h34" stroke="#3fae2a" stroke-width="3" />
              <path d="M100 883h224v219H204v108h155M204 1102h155M360 1028h120l25 20h35M208 885v215M100 883v217h104M360 1028v332h100l45-47h110" fill="none" stroke="#0e8f0e" stroke-width="3" />
              <path d="M208 885v215" stroke="#0e8f0e" stroke-width="9" />
              <path d="M108 890h98v112h-98zM213 890h92v112h-92zM215 1015h103v85H215zM208 1105h110v80H208zM322 1118h68v40h-68zM540 972h75v128h-75zM540 1190h75v122h-75zM508 1025h30v65h-30zM508 1242h30v65h-30z" fill="none" stroke="#8f8f70" stroke-width="3" />
              <path d="M540 1045h75M505 1095h110M405 1160v-18h50l50-47M540 1262h75M405 1225v20h75l30 20h30M475 810h-15 35" fill="none" stroke="#0e8f0e" stroke-width="5" />
              <circle cx="143" cy="1053" r="12" /><path d="M169 1033v45" stroke="#900" stroke-width="3" />
              <circle cx="143" cy="1140" r="25" fill="none" stroke="#111" stroke-width="4" stroke-dasharray="10 4" /><circle cx="143" cy="1140" r="13" />
              <g font-family="DejaVu Sans" fill="#e8e8d8" font-size="22"><text x="136" y="968">2</text><text x="265" y="968">L</text><text x="260" y="1035">L</text><text x="258" y="1160">2</text><text x="137" y="1135" font-size="16">2</text><text x="130" y="1157" font-size="14" font-weight="bold">GND</text><text x="480" y="766">Z</text></g>

              <g fill="none" stroke="#0e8f0e" stroke-width="5">
                <path d="M392 705v120l60 62h60l98 90M412 705v110l50 50h60l90 90M580 775v55l40 45h45v80M597 775v50l30 28h35M683 775v85l3 95M808 705v170l-75 80M826 705v185l-75 65M650 850l0-35" />
                <path d="M915 705l5 40 30 20M1012 705v40h-30M610 958v185" />
              </g>
              <path d="M578 738h90v38h-90zM628 775h54v36h-54zM530 705h25v20h-25zM946 745h44v28h-44z" fill="none" stroke="#8f8f70" stroke-width="3" />
              <g fill="none" stroke="#3a9a12" stroke-width="3"><circle cx="712" cy="730" r="16" /><circle cx="712" cy="762" r="16" /><circle cx="1027" cy="788" r="16" /><circle cx="1058" cy="788" r="16" /><circle cx="1088" cy="788" r="16" /></g>
              <path d="M985 762h40l22-18" fill="none" stroke="#111" stroke-width="14" /><path d="M985 762h40l22-18" fill="none" stroke="#a01020" stroke-width="8" />
              <path d="M612 958h120M612 958v185h320v-40M612 1180h120M612 1180v190h320v-40" fill="none" stroke="#000" stroke-width="6" stroke-dasharray="14 3" />
              <path d="M740 960h191v140M760 1180h171v130" fill="none" stroke="#8a1010" stroke-width="4" />
              <path d="M760 1186h50M828 1186h75" stroke="#b01010" stroke-width="9" stroke-dasharray="12 3" />
              <path d="M757 975v52h174M757 1190v55h174" fill="none" stroke="#0e8f0e" stroke-width="3" /><path d="M760 975h26v50h-26zM762 1188h24v55h-24zM618 962h112v140H618zM618 1184h112v125H618z" fill="none" stroke="#6f8f30" stroke-width="2" />
              <path d="M963 983h54v102h-54zM963 1210h54v102h-54z" fill="none" stroke="#8f8f70" stroke-width="3" />
              <path d="M932 1070h25l15-20 15 0M932 1092h40M940 1265l20 30" fill="none" stroke="#300" stroke-width="4" />
              <g v-for="y in [1010, 1237]" :key="y"><circle cx="989" :cy="y" r="18" fill="none" stroke="#111" stroke-width="5" stroke-dasharray="12 5" /><circle cx="989" :cy="y" r="9" /><circle cx="989" :cy="y + 44" r="9" fill="#101050" /></g>
              <path :transform="'translate(-1456 -1650) scale(2.8 3)'" :d="chipPath" fill="#808000" stroke="#fff" stroke-width=".8" />
              <g font-family="DejaVu Sans" fill="#f4f4e4" font-size="28">
                <text transform="translate(655 1072) rotate(-90)">+3V3</text><text transform="translate(708 1046) rotate(-90)">2</text>
                <text transform="translate(655 1288) rotate(-90)">+5V</text><text transform="translate(708 1262) rotate(-90)">2</text>
                <text transform="translate(427 995) rotate(-90)" font-size="18" font-weight="bold">GND</text><text transform="translate(442 980) rotate(-90)" font-size="16">2</text>
                <text transform="translate(427 1215) rotate(-90)" font-size="18" font-weight="bold">GND</text><text transform="translate(442 1200) rotate(-90)" font-size="16">2</text>
                <text transform="translate(808 772) rotate(90)" font-size="17" font-weight="bold">LINE</text>
                <text transform="translate(742 975) rotate(-45)" font-size="17" font-weight="bold">3V3</text>
                <text transform="translate(1102 1230) rotate(-45)" font-size="15" font-weight="bold">+5V</text>
                <text transform="translate(1236 985) rotate(-90)" font-size="17" font-weight="bold">+5V</text>
                <text transform="translate(440 1090) rotate(-90)" font-size="16">L</text><text transform="translate(440 1308) rotate(-90)" font-size="16">L</text>
              </g>

              <g fill="none" stroke="#200000" stroke-width="8"><path d="M1155 1128V745l30-35M1180 1000V735M1203 965V705" /></g>
              <g fill="none" stroke="#a0100a" stroke-width="4">
                <path d="M1155 1128V745l30-35M1180 1000V735M1192 965V705M1203 965V705M1220 705v375l-178 190h-30M1240 705v380h25M1250 1090h-15l-183 202h-30l-40 33h-20l-30 40M1150 735l40-25" />
              </g>
              <path d="M1357 705v360" stroke="#400" stroke-width="16" /><path d="M1357 705v360l5 40-12 28" fill="none" stroke="#a01414" stroke-width="10" />
              <g fill="none" stroke="#0e8f0e" stroke-width="6"><path d="M1180 1000h140M1203 965h110M1155 1128l100 112h70M1165 1128l100 102h60M1240 820h70M1240 832h70M1250 710l30 22h40" /><path d="M1230 800v60" stroke-width="16" /></g>
              <g fill="none" stroke="#8f8f70" stroke-width="2.500">
                <path d="M1278 745h100v36h-100zM1292 715h60v66h-60zM1320 750h55v72h-55zM1292 820h30v50h-30zM1320 850h60v80h-60zM1278 905h100v30h-100zM1295 940h80v38h-80zM1303 1015h75v38h-75zM1320 1065h55v90h-55zM1278 1183h100v32h-100zM1295 1150h80v100h-80zM1412 745h35v70h-35zM1418 870h28v120h-28zM1418 1010h28v100h-28zM1412 1165h35v80h-35zM1448 712v540M1448 850h120M1448 1123h120" />
              </g>
              <g v-for="(p, i) in sidePads" :key="'s' + i">
                <path :d="`M1450 ${p[0] + 4}h115M1450 ${p[0] - 5}h40`" stroke="#0e8f0e" stroke-width="5" />
                <circle v-if="p[1]" cx="1508" :cy="p[0]" r="14" fill="#858500" stroke="#111" stroke-width="3" />
                <path v-else :d="`M1493 ${p[0] - 12}v24`" stroke="#111" stroke-width="3" />
                <circle cx="1508" :cy="p[0]" r="7" />
              </g>
              <path d="M1258 1078l22 24" stroke="#111" stroke-width="22" stroke-linecap="round" /><path d="M1258 1078l22 24" stroke="#9c9c5c" stroke-width="14" stroke-linecap="round" />
              <g fill="#fff" stroke="#000" stroke-width="5"><circle cx="1178" cy="722" r="5.500" /><circle cx="1178" cy="738" r="5.500" /><circle cx="1352" cy="860" r="5.500" /><circle cx="1203" cy="966" r="5.500" /><circle cx="1180" cy="1000" r="5.500" /><circle cx="1155" cy="1128" r="5.500" /><circle cx="1362" cy="1106" r="5.500" /><circle cx="1350" cy="1129" r="5.500" /><circle cx="1050" cy="742" r="5.500" /></g>

              <circle cx="112" cy="1315" r="46" fill="none" stroke="#8f8f70" stroke-width="6" />
              <circle cx="112" cy="1315" r="29" /><circle cx="238" cy="1330" r="30" /><circle cx="238" cy="1330" r="6" fill="#999" />
              <text x="109" y="1322" font-size="18" fill="#fff" font-family="DejaVu Sans">L</text>
              <path d="M1420 1285h150v88h-150z" fill="#000" />
              <text x="1424" y="1353" font-size="72" fill="none" stroke="#a0a030" stroke-width="3" textLength="136" lengthAdjust="spacingAndGlyphs" font-family="Liberation Sans">TOB</text>
            </g>
            <path :d="viaPath" fill="#808000" stroke="#c9c9a0" stroke-width=".8" />
            <path d="M39 138.500h495M241.500 123v889" stroke="#fff" stroke-width="1" /><path d="M534 138.500h670" stroke="#fff" stroke-width="1" stroke-opacity=".5" /><path d="M1204 138.500h496" stroke="#fff" />
          </svg>
          <div class="hscroll"><span class="sbtn"><svg viewBox="0 0 10 10"><path d="M6.500 1.500L3 5l3.500 3.500" /></svg></span><span class="hthumb"></span></div>
        </div>
        <div class="vscroll"><span class="sbtn"><svg viewBox="0 0 10 10"><path d="M1.500 6.500L5 3l3.500 3.500" /></svg></span><span class="vthumb"><i></i><i></i><i></i><i></i></span></div>
      </section>

      <aside class="tools right">
        <template v-for="(t, i) in rightBar" :key="i">
          <i v-if="t === '|'" class="hsep"></i>
          <span v-else :class="['tool', { on: t.endsWith('*') }]" v-html="icon(t)"></span>
        </template>
      </aside>

      <aside class="layers">
        <h2>Sichtbarkeit</h2>
        <div class="frame">
          <div class="tabs"><span class="tab active">Lagen</span><span class="tab">Elemente</span></div>
          <div class="page">
            <div v-for="(l, i) in visible" :key="l[0]" class="lrow">
              <i :class="['mark', { cur: i === 0 }]"></i>
              <i class="sw"><b :style="{ background: l[1] }"></b></i>
              <i class="check"><svg v-if="l[2]" viewBox="0 0 11 11"><path d="M2 4.500L4.500 7.500 9 2.500" /></svg></i>
              <span>{{ l[0] }}</span>
            </div>
          </div>
        </div>
      </aside>
    </main>

    <div class="msgpanel"></div>
    <footer class="status">
      <span class="s0">links 768 nc 96&nbsp; net 2: not conn 92</span><span class="s1">Z 1,56</span><span class="s2">X 99,000000&nbsp; Y -217,000000</span><span class="s3">dx 99,000000&nbsp; dy -217,000000&nbsp; dist 238,516</span><span class="s4">mm</span><span class="s5"></span>
    </footer>
    <div class="taskbar"><i></i></div>

    <!-- Plot dialog -->
    <section class="win plot">
      <header class="wtitle"><span>Plotten</span><b class="wclose"><svg viewBox="0 0 18 18"><path d="M5 5l8 8M13 5l-8 8" /></svg></b></header>
      <div class="client">
        <div class="prow">
          <div class="f1"><label>Plotformat:</label><div class="combo"><span>Gerber</span><b class="drop"><svg viewBox="0 0 10 8"><path d="M1.500 1.500L5 5l3.500-3.500" /></svg></b></div></div>
          <div class="f2"><label>Ausgabeverzeichnis:</label><div class="input">GERBER/</div></div>
          <span class="btn">Suchen...</span>
        </div>
        <div class="pmid">
          <div class="group glayers"><span class="legend">Lagen</span>
            <div class="list">
              <div v-for="l in plotLayers" :key="l[0]" class="opt"><i class="check"><svg v-if="l[1]" viewBox="0 0 11 11"><path d="M2 4.500L4.500 7.500 9 2.500" /></svg></i>{{ l[0] }}</div>
            </div>
          </div>
          <div class="pcol">
            <div class="group gopt"><span class="legend">Optionen</span>
              <div class="cols">
                <div class="checks">
                  <div v-for="o in plotOptions" :key="o[0]" :class="['opt', o[2]]"><i class="check"><svg v-if="o[1]" viewBox="0 0 11 11"><path d="M2 4.500L4.500 7.500 9 2.500" /></svg></i>{{ o[0] }}</div>
                </div>
                <div class="sels">
                  <template v-for="c in plotCombos" :key="c[0]"><label>{{ c[0] }}</label><div class="combo dis"><span>{{ c[1] }}</span><b class="drop"><svg viewBox="0 0 10 8"><path d="M1.500 1.500L5 5l3.500-3.500" /></svg></b></div></template>
                  <label class="wide">Voreinstellung für Linienbreite (mm):</label><div class="input">0,15</div>
                </div>
              </div>
            </div>
            <div class="group gmask"><span class="legend">Aktuelle Einstellungen der Lötstoppmaske:</span>
              <div class="pair"><span>Abstand Lötstoppmaske:</span><span>0 mm</span></div>
              <div class="pair"><span>Min.breite der Lötstoppmaske:</span><span>0 mm</span></div>
            </div>
            <div class="group ggerb"><span class="legend">Gerber Optionen</span>
              <div class="cols">
                <div class="checks"><div v-for="o in gerberOptions" :key="o[0]" class="opt"><i class="check"><svg v-if="o[1]" viewBox="0 0 11 11"><path d="M2 4.500L4.500 7.500 9 2.500" /></svg></i>{{ o[0] }}</div></div>
                <div class="group gfmt"><span class="legend">Format</span>
                  <div class="radios"><div class="opt"><i class="radio"></i>4.5 (Einheit mm)</div><div class="opt"><i class="radio sel"></i>4.6 (Einheit mm)</div></div>
                </div>
              </div>
            </div>
          </div>
        </div>
        <div class="group gmsg"><span class="legend">Meldungen:</span>
          <div class="area"><template v-for="n in 5" :key="n"><p>Plotdatei &lt;C:\Dokumente und</p><p>Einstellungen\Ludo\Desktop\Ludwig\15_05_KiCad\freeDSP_1452\GERBER\freeDSP_1452-B</p></template></div>
        </div>
        <div class="pbtns"><span class="btn def">Plotten</span><span class="btn">Bohrdatei</span></div>
      </div>
    </section>

    <!-- Drill dialog -->
    <section class="win drill">
      <header class="wtitle"><span>Bohrdatei Generator</span><b class="wclose"><svg viewBox="0 0 18 18"><path d="M5 5l8 8M13 5l-8 8" /></svg></b></header>
      <div class="client">
        <div class="group gdir"><span class="legend">Ausgabeverzeichnis:</span>
          <div class="cols"><div class="input"><em>GERBER/</em></div><span class="btn">Durchsuchen</span></div>
        </div>
        <div class="dmid">
          <div class="dcol a">
            <div class="group gunit"><span class="legend">Bohreinheiten:</span><div class="radios"><div v-for="r in units" :key="r[0]" class="opt"><i :class="['radio', { sel: r[1] }]"></i>{{ r[0] }}</div></div></div>
            <div class="group gzero"><span class="legend">Nullen Format</span><div class="radios"><div v-for="r in zeros" :key="r[0]" class="opt"><i :class="['radio', { sel: r[1] }]"></i>{{ r[0] }}</div></div></div>
            <div class="group gprec"><span class="legend">Präzision</span><p>2:4</p></div>
          </div>
          <div class="dcol b">
            <div class="group gmap"><span class="legend">Bohrplan Dateiformat:</span><div class="radios"><div v-for="r in mapFormats" :key="r[0]" class="opt"><i :class="['radio', { sel: r[1] }]"></i>{{ r[0] }}</div></div></div>
            <div class="group gdopt"><span class="legend">Bohrdatei Optionen:</span><div class="checks"><div v-for="o in drillOptions" :key="o[0]" class="opt"><i class="check"><svg v-if="o[1]" viewBox="0 0 11 11"><path d="M2 4.500L4.500 7.500 9 2.500" /></svg></i>{{ o[0] }}</div></div></div>
            <div class="group gorig"><span class="legend">Bohrlochursprung:</span><div class="radios"><div v-for="r in origins" :key="r[0]" class="opt"><i :class="['radio', { sel: r[1] }]"></i>{{ r[0] }}</div></div></div>
          </div>
          <div class="group ghint"><span class="legend">Hinweis</span>
            <div class="group sub"><span class="legend">Voreinstellung DuKo-Bohrdurchmesser</span><p>Verwende Werte der Netzklassen</p></div>
            <div class="group sub"><span class="legend">Micro DuKo-Bohrdurchmesser</span><p class="off">Verwende Werte der Netzklassen</p></div>
            <div class="group cnt"><span class="legend">Anzahl Löcher</span><p v-for="h in holes" :key="h">{{ h }}</p></div>
          </div>
          <div class="dbtns"><span v-for="(b, i) in drillButtons" :key="b" :class="['btn', { def: i === 0 }]">{{ b }}</span></div>
        </div>
        <div class="group gdmsg"><span class="legend">Meldungen:</span>
          <div class="area"><div class="ascroll"><span><svg viewBox="0 0 10 10"><path d="M1.500 6.500L5 3l3.500 3.500" /></svg></span><span><svg viewBox="0 0 10 10"><path d="M1.500 3.500L5 7l3.500-3.500" /></svg></span></div></div>
        </div>
        <svg class="grip" viewBox="0 0 12 12"><path d="M9 1h2v2H9zM5 5h2v2H5zM9 5h2v2H9zM1 9h2v2H1zM5 9h2v2H5zM9 9h2v2H9z" fill="#b8b4a2" /></svg>
      </div>
    </section>
  </div>
</template>

<style>
body { margin: 0; overflow: hidden; background: #ece9d8; }
.slot svg, .tool svg { display: block; overflow: visible; }
</style>

<style scoped>
* { box-sizing: border-box; }
.app { position: relative; width: 1920px; height: 1082px; display: flex; flex-direction: column; overflow: hidden; background: #ece9d8; font: 11px/14px "DejaVu Sans Condensed", "DejaVu Sans", sans-serif; letter-spacing: -0.24px; color: #000; white-space: nowrap; }
i, em { font-style: normal; }
p, h2 { margin: 0; font-weight: normal; }
.titlebar { height: 26px; flex: none; display: flex; align-items: center; padding: 2px 5px 0 3px; background: linear-gradient(#9db9f0, #7b99e1 18%, #7a96df 70%, #82a2e8 92%, #7089d6); }
.appicon { width: 15px; height: 16px; margin-right: 3px; }
.apptitle { font: 600 13px/20px "Noto Sans", sans-serif; color: #dbe6fb; letter-spacing: 0.06px; flex: 1; }
.sysbtns { display: flex; gap: 3px; }
.sys { width: 20px; height: 20px; border: 1px solid #dfe6f8; border-radius: 3px; background: linear-gradient(135deg, #7391ea, #3c5fd0); }
.sys.close { background: linear-gradient(135deg, #d88a80, #b8523f); }
.sys svg { display: block; width: 18px; height: 18px; }
.menu { height: 19px; flex: none; display: flex; gap: 12.3px; padding-left: 5px; line-height: 19px; color: #a8a594; letter-spacing: -0.23px; }
.toolbar { height: 38px; flex: none; display: flex; align-items: center; padding: 2px 0 0 5px; border-top: 1px solid #fff; border-bottom: 1px solid #b0ad9f; background: linear-gradient(#f4f3ea, #e9e7da 50%, #d7d4c4); }
.toolbar.second { height: 39px; border-bottom: 2px solid #aca999; margin-bottom: 1px; }
.slot { width: 34px; height: 34px; flex: none; display: flex; align-items: center; justify-content: center; }
.vsep { width: 1px; height: 24px; margin: 0 4px; background: #b9b5a3; flex: none; }
.combo { display: flex; align-items: center; height: 21px; border: 1px solid #7f9db9; background: #fff; padding: 0 1px 0 3px; }
.combo span { flex: 1; }
.drop { width: 15px; height: 17px; border-radius: 2px; background: linear-gradient(#dce6fd, #b5c9f6); display: flex; align-items: center; justify-content: center; }
.drop svg { width: 10px; height: 8px; }
.drop path { fill: none; stroke: #42578c; stroke-width: 2.2; }
.combo.layer { width: 129px; height: 22px; margin: 0 0 0 9px; padding-left: 6px; }
.chip { width: 14px; height: 14px; background: #7a0000; border: 1px solid #300; margin-right: 4px; }
.c1 { width: 170px; margin-left: 1px; }
.c2 { width: 153px; margin-left: 2px; }
.c2 + .vsep { margin-left: 5px; }
.c3 { width: 172px; margin-left: 0; margin-right: 1px; }
.c4 { width: 97px; margin-left: 1px; }
.body { height: 908px; flex: none; display: flex; background: #ece9d8; }
.tools { display: flex; flex-direction: column; align-items: center; padding-top: 5px; background: linear-gradient(90deg, #f6f5ee, #e2dfd1); }
.tools.left { width: 38px; border-left: 1px solid #fff; padding-right: 1px; }
.tools.right { width: 38px; margin-left: 1px; border-right: 1px solid #aca999; overflow: hidden; }
.tool { width: 32px; height: 32px; flex: none; margin-bottom: 2px; display: flex; align-items: center; justify-content: center; }
.tool.on { border: 1px solid #316ac5; background: #c1d2ee; }
.hsep { width: 24px; height: 1px; flex: none; margin: 3px 0 5px; background: #b9b5a3; }
.work { width: 1680px; flex: none; display: flex; border-left: 1px solid #716f64; border-right: 2px solid #716f64; border-bottom: 1px solid #000; }
.view { width: 1661px; }
.pcb { display: block; }
.hscroll { height: 18px; display: flex; align-items: center; background: #fdfdfb; padding: 1px 0; }
.sbtn { width: 16px; height: 16px; flex: none; border: 1px solid #a9bdf0; border-radius: 2px; background: #c4d4fb; display: flex; align-items: center; justify-content: center; }
.sbtn svg { width: 12px; height: 12px; }
.sbtn path { fill: none; stroke: #42578c; stroke-width: 2; }
.hthumb { margin-left: 487px; width: 900px; height: 15px; border: 1px solid #b4c8f6; border-radius: 2px; background: #c4d4fb; }
.vscroll { width: 16px; background: #fdfdfb; display: flex; flex-direction: column; padding-top: 2px; }
.vthumb { width: 15px; height: 209px; margin-top: 1px; border: 1px solid #a9bdf0; border-radius: 2px; background: linear-gradient(90deg, #ccdafc, #b9ccf8); display: flex; flex-direction: column; align-items: center; justify-content: center; gap: 1px; }
.vthumb i { width: 6px; height: 1px; background: #eef3fe; }
.layers { flex: 1; margin-left: 3px; border-left: 1px solid #aca999; padding: 0 5px 0 5px; }
.layers h2 { font: 11px/14px "Liberation Sans", sans-serif; letter-spacing: 0; margin: 0 0 0 -2px; }
.frame { height: 870px; margin-top: 8px; border: 1px solid #bab7a6; }
.tabs { height: 19px; display: flex; align-items: flex-end; padding-left: 6px; border-bottom: 1px solid #aca999; background: linear-gradient(#f1efe3, #fcfbf6); }
.tab { height: 14px; padding: 0 6px; border: 1px solid #aca999; border-bottom: 0; border-radius: 2px 2px 0 0; background: #f1efe2; font-size: 9px; line-height: 13px; letter-spacing: -0.4px; color: #8a8878; }
.tab.active { height: 15px; background: #fdfcf8; }
.page { border-top: 1px solid #aca999; margin-top: 2px; padding: 1px 0 0 5px; }
.lrow { height: 18px; display: flex; align-items: center; font-size: 8.500px; letter-spacing: -0.45px; color: #333; }
.mark { width: 8px; height: 12px; margin-right: 2px; }
.mark.cur { background: linear-gradient(#8080e8 50%, #0000e0 50%); clip-path: polygon(0 0, 100% 60%, 0 100%); }
.sw { width: 17px; height: 15px; border: 1px solid #1c3f6e; border-radius: 3px; background: #fff; display: flex; align-items: center; justify-content: center; margin-right: 3px; }
.sw b { width: 12px; height: 10px; border: 1px solid #000; }
.check { width: 13px; height: 13px; flex: none; border: 1px solid #1c5180; background: linear-gradient(135deg, #dcdcd7, #fff 70%); }
.check svg { display: block; width: 11px; height: 11px; }
.check path { fill: none; stroke: #21a121; stroke-width: 2.2; }
.lrow .check { margin-right: 1px; }
.msgpanel { height: 29px; flex: none; border: 1px solid #aca999; border-width: 1px 1px 2px; }
.status { height: 20px; flex: none; display: flex; line-height: 23px; background: linear-gradient(#f2f0e4, #ece9d8 40%, #dfdcca); letter-spacing: -0.19px; }
.status span { flex: none; padding-left: 5px; border-left: 1px solid #c5c2b2; box-shadow: inset 1px 0 #fff; height: 20px; }
.status .s0 { width: 1214px; padding-left: 1px; border: 0; box-shadow: none; }
.s1 { width: 65px; } .s2 { width: 174px; } .s3 { width: 262px; } .s4 { width: 35px; } .s5 { width: 170px; }
.taskbar { height: 2px; background: #000; padding-left: 296px; }
.taskbar i { display: block; width: 1366px; height: 2px; background: #a3afe4; }

.win { position: absolute; border-radius: 7px 7px 0 0; }
.wtitle { display: flex; align-items: center; justify-content: space-between; height: 29px; border-radius: 7px 7px 0 0; font: 600 13px/20px "Noto Sans", sans-serif; letter-spacing: -0.05px; }
.wclose { width: 21px; height: 21px; border: 1px solid #fff; border-radius: 3px; }
.wclose svg { display: block; width: 19px; height: 19px; }
.wclose path { stroke: #fff; stroke-width: 2.4; }
.client { background: #ece9d8; display: flex; flex-direction: column; position: relative; }
.group { border: 1px solid #d0d0bf; border-radius: 4px; display: flex; flex-direction: column; flex: none; }
.legend { align-self: flex-start; margin: -8px 0 0 4px; padding: 0 3px; height: 14px; line-height: 14px; background: #ece9d8; color: #1446a8; flex: none; }
.input { background: #fff; border: 1px solid #7f9db9; padding-left: 5px; line-height: 18px; }
.btn { display: block; height: 22px; border: 1px solid #003c74; border-radius: 3px; background: linear-gradient(#fff, #f3f2ed 80%, #d8d2c4); text-align: center; line-height: 21px; flex: none; }
.btn.def { box-shadow: inset 0 0 0 2px #a9c4ef; }
.opt { height: 15px; display: flex; align-items: center; }
.opt.gap { margin-top: 2px; }
.opt .check, .opt .radio { margin-right: 3px; }
.off { color: #a8a592; }
.off .check { border-color: #cac8bb; background: #fff; }
.radio { width: 13px; height: 13px; flex: none; border: 1px solid #1c5180; border-radius: 50%; background: linear-gradient(135deg, #dcdcd7, #fff 70%); display: flex; align-items: center; justify-content: center; }
.radio.sel::after { content: ""; width: 5px; height: 5px; border-radius: 50%; background: #21a121; }
.radios { display: flex; flex-direction: column; gap: 4px; padding: 8px 0 0 4px; }
.cols { display: flex; }

.plot { left: 629px; top: 142px; width: 645px; height: 644px; background: #7b8ad8; padding: 0 4px 3px 3px; }
.plot .wtitle { margin: 0 -4px 0 -3px; padding: 2px 6px 0 6px; background: linear-gradient(#9db9f0, #7b99e1 20%, #7a96df 70%, #82a2e8 92%, #7089d6); color: #dbe6fb; }
.plot .wclose { background: #b25263; border-color: #d8c8e8; }
.plot .client { height: 612px; padding: 10px 8px 0 5px; }
.prow { display: flex; height: 48px; padding-left: 4px; }
.prow label { display: block; height: 15px; line-height: 15px; }
.sels label { display: block; height: 14px; }
.f1 { width: 76px; margin-right: 10px; }
.f2 { width: 448px; margin-right: 11px; }
.f2 .input { height: 23px; }
.prow .btn { width: 74px; margin-top: 15px; }
.pmid { display: flex; height: 341px; padding-left: 4px; }
.glayers { width: 117px; height: 341px; margin-right: 3px; }
.list { margin: 2px 4px 0 3px; height: 327px; border: 1px solid #7f9db9; background: #fff; padding: 2px 0 0 2px; }
.list .opt { letter-spacing: 0.03px; }
.list .check { margin-right: 2px; }
.pcol { width: 507px; display: flex; flex-direction: column; }
.gopt { margin: 0 4px 0 3px; height: 175px; }
.gopt .checks { width: 310px; padding: 4px 0 0 6px; }
.sels { width: 180px; padding-top: 3px; }
.sels .combo { height: 20px; margin-bottom: 6px; }
.sels .input { height: 21px; line-height: 19px; }
.combo.dis { background: #ece9d8; border-color: #c9c7ba; color: #b0ad9c; }
.combo.dis .drop { background: #e4e1d2; border: 1px solid #d6d3c3; }
.combo.dis .drop path { stroke: #b5b2a1; }
.gmask { margin-top: 10px; height: 57px; }
.pair { display: flex; height: 14px; margin: 5px 0 0 8px; }
.legend + .pair { margin-top: 8px; }
.pair span:first-child { width: 156px; }
.ggerb { margin: 11px 4px 0 3px; height: 87px; }
.ggerb .checks { width: 263px; padding: 15px 0 0 6px; display: flex; flex-direction: column; gap: 2px; }
.gfmt { width: 224px; height: 55px; margin-top: 15px; }
.gfmt .radios { padding-top: 7px; }
.gmsg { margin-top: 10px; height: 165px; width: 625px; }
.gmsg .area { margin: 2px 4px 0; height: 149px; border: 1px solid #7f9db9; background: #fff; padding: 3px 0 0 1px; overflow: hidden; letter-spacing: -0.21px; }
.gmsg p { line-height: 13px; }
.pbtns { display: flex; gap: 12px; padding: 5px 0 0 330px; }
.pbtns .btn { width: 73px; }
.pbtns .btn + .btn { width: 90px; padding-left: 6px; text-align: left; }

.drill { left: 1076px; top: 553px; width: 830px; height: 503px; background: #0a3fd0; padding: 0 4px 4px 4px; box-shadow: inset -1px -1px #00138c, inset 1px 0 #0831d9; }
.drill .wtitle { margin: 0 -4px 0 -4px; padding: 2px 6px 0 7px; background: linear-gradient(#2f86f8, #0058e6 16%, #0055e5 60%, #0366fb 90%, #0246d0); color: #fff; letter-spacing: -0.3px; }
.drill .wclose { background: linear-gradient(135deg, #f09a7c, #d8401c); }
.drill .client { height: 470px; padding: 7px 0 0 6px; }
.gdir { width: 811px; height: 43px; }
.gdir .input { width: 707px; height: 21px; margin: 4px 11px 0 8px; }
.gdir .input em { background: #316ac5; color: #fff; }
.gdir .btn { width: 78px; height: 21px; margin-top: 4px; line-height: 20px; }
.dmid { display: flex; height: 294px; padding-top: 12px; }
.dcol { display: flex; flex-direction: column; flex: none; }
.dcol.a { width: 198px; }
.dcol.a .radios { padding-left: 3px; }
.dcol.b { width: 284px; }
.gunit { width: 188px; height: 56px; }
.gzero { width: 188px; height: 95px; margin-top: 17px; }
.gprec { width: 199px; height: 39px; margin: 11px 0 0 -6px; }
.gprec p { margin: 9px 0 0 9px; }
.gmap { width: 279px; height: 133px; }
.gdopt { width: 279px; height: 70px; margin-top: 11px; }
.gdopt .checks { padding: 3px 0 0 9px; display: flex; flex-direction: column; gap: 3px; }
.gorig { width: 279px; height: 56px; margin-top: 11px; }
.ghint { width: 240px; height: 249px; margin-right: 6px; }
.ghint .group { margin: 12px 4px 0; }
.ghint > .legend + .group { margin-top: 15px; }
.sub { height: 39px; }
.cnt { height: 115px; }
.ghint p { margin: 5px 0 0 9px; height: 14px; }
.ghint .legend + p { margin-top: 9px; }
.ghint .sub p.off { text-shadow: 1px 1px #fff; }
.dbtns { padding-top: 14px; display: flex; flex-direction: column; gap: 12px; }
.dbtns .btn { width: 82px; height: 21px; line-height: 20px; }
.gdmsg { width: 822px; height: 112px; margin: 12px 0 0 -6px; }
.gdmsg .area { margin: 7px 0 0 9px; width: 801px; height: 90px; border: 1px solid #7f9db9; background: #fff; display: flex; justify-content: flex-end; }
.ascroll { width: 17px; height: 86px; background: #f7f6f2; display: flex; flex-direction: column; justify-content: space-between; padding: 1px; }
.ascroll span { width: 14px; height: 15px; border: 1px solid #e0ddd0; border-radius: 2px; background: #f1efe6; }
.ascroll path { fill: none; stroke: #c4c2b6; stroke-width: 2; }
.ascroll svg { display: block; width: 12px; height: 13px; }
.grip { position: absolute; right: 2px; bottom: 1px; width: 12px; height: 12px; }
</style>
